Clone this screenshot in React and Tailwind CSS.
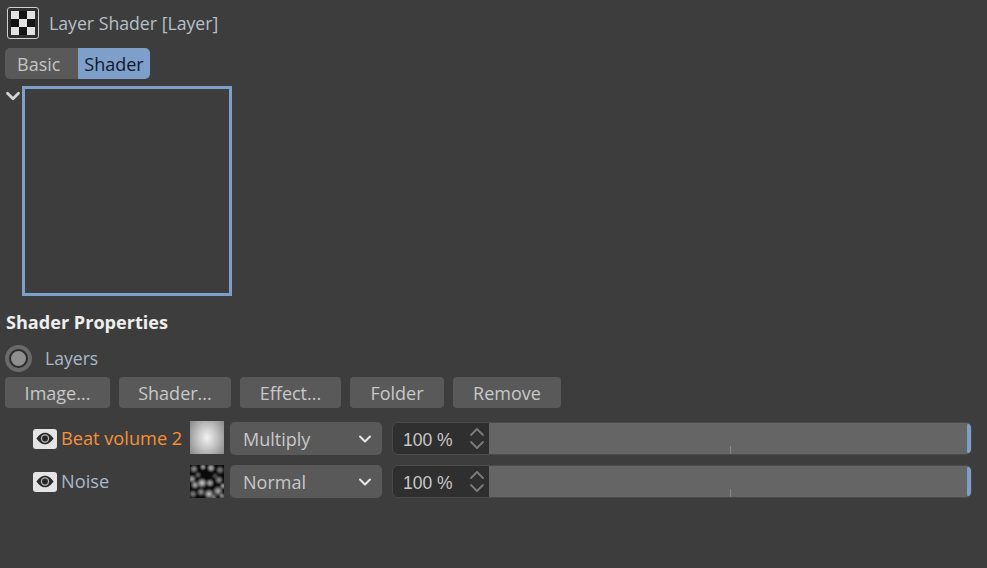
import { ChevronDown, ChevronUp } from "lucide-react";

function CheckerIcon() {
  return (
    <div className="w-[32px] h-[32px] rounded-[3px] bg-[#2f2f2f] border border-[#d0d0d0] p-[3px] shrink-0">
      <svg viewBox="0 0 3 3" className="w-full h-full" shapeRendering="crispEdges">
        <rect width="3" height="3" fill="#e2e2e2" />
        <rect x="1" y="0" width="1" height="1" fill="#141414" />
        <rect x="0" y="1" width="1" height="1" fill="#141414" />
        <rect x="2" y="1" width="1" height="1" fill="#141414" />
        <rect x="1" y="2" width="1" height="1" fill="#141414" />
      </svg>
    </div>
  );
}

function EyeButton() {
  return (
    <div className="w-[24px] h-[20px] rounded-[3px] bg-[#e4e4e4] flex items-center justify-center shrink-0">
      <svg viewBox="0 0 20 14" className="w-[18px] h-[13px]">
        <path d="M0.5 7 C4 2 7 0.5 10 0.5 C13 0.5 16 2 19.5 7 C16 12 13 13.5 10 13.5 C7 13.5 4 12 0.5 7 Z" fill="#2a2a2a" />
        <circle cx="10" cy="7" r="4.6" fill="#b8b8b8" />
        <circle cx="10" cy="7" r="3.2" fill="#262626" />
      </svg>
    </div>
  );
}

const noiseBlobs = [
  [4, 4, 5, 0.7], [13, 2, 4, 0.8], [21, 3, 5, 0.9], [30, 5, 5, 0.6], [8, 10, 4, 0.5],
  [2, 14, 5, 0.8], [12, 18, 6, 1], [20, 18, 5, 0.85], [29, 15, 5, 0.7], [5, 20, 5, 0.85],
  [25, 11, 4, 0.35], [3, 29, 5, 0.6], [11, 27, 5, 0.7], [19, 29, 6, 0.95], [28, 26, 6, 0.85],
  [33, 21, 4, 0.8], [32, 31, 4, 0.7], [24, 32, 4, 0.6],
];

function NoiseThumb() {
  return (
    <svg viewBox="0 0 34 33" className="w-[34px] h-[33px] bg-[#0a0a0a] shrink-0 -mt-[1px]">
      <defs>
        <radialGradient id="blob">
          <stop offset="0%" stopColor="#cccccc" />
          <stop offset="45%" stopColor="#a0a0a0" stopOpacity="0.8" />
          <stop offset="100%" stopColor="#808080" stopOpacity="0" />
        </radialGradient>
      </defs>
      {noiseBlobs.map(([x, y, r, o], i) => (
        <circle key={i} cx={x} cy={y} r={r} fill="url(#blob)" opacity={o} />
      ))}
    </svg>
  );
}

function GradientThumb() {
  return (
    <div className="w-[34px] h-[33px] shrink-0 -mt-[3px] bg-[radial-gradient(ellipse_70%_90%_at_50%_50%,#f2f2f2_0%,#c4c4c4_40%,#7c7c7c_100%)]" />
  );
}

function LayerRow({ name, active, mode, thumb, className }) {
  return (
    <div className={`flex items-center h-[33px] pl-[33px] ${className}`}>
      <EyeButton />
      <span className={`ml-[4px] w-[129px] text-[18.2px] leading-none ${active ? "text-[#f5913a]" : "text-[#a9b9c8]"}`}>
        {name}
      </span>
      {thumb}
      <div className="ml-[6px] w-[152px] h-[33px] rounded-[5px] bg-[#595959] flex items-center justify-between pl-[13px] pr-[7px] text-[18px] text-[#c8c8c8] shrink-0">
        <span className="pt-[2px]">{mode}</span>
        <ChevronDown size={20} strokeWidth={2.4} className="text-[#e8e8e8]" />
      </div>
      <div className="ml-[10px] w-[580px] h-[33px] rounded-[6px] border border-[#4a4a4a] flex overflow-hidden shrink-0">
        <div className="w-[96px] bg-[#2f2f2f] flex items-center justify-between pl-[10px] text-[#c8c8c8] shrink-0">
          <span className="pt-[3px] font-['Liberation_Sans',sans-serif] text-[17.5px]">100 %</span>
          <div className="flex flex-col items-center -space-y-[11px]">
            <ChevronUp size={24} strokeWidth={1.8} className="text-[#7c7c7c]" />
            <ChevronDown size={24} strokeWidth={1.8} className="text-[#7c7c7c]" />
          </div>
        </div>
        <div className="relative flex-1 bg-[#656565]">
          <div className="absolute left-[241px] bottom-0 w-px h-[8px] bg-[#7d8a99]" />
          <div className="absolute right-0 top-0 bottom-0 w-[4px] rounded-l-[3px] bg-[#7f9fcb]" />
        </div>
      </div>
    </div>
  );
}

function ActionButton({ label, width }) {
  return (
    <div className={`${width} h-[31px] pt-[2px] rounded-[4px] bg-[#595959] flex items-center justify-center text-[18px] text-[#c8c8c8] shrink-0`}>
      {label}
    </div>
  );
}

export default function App() {
  return (
    <div className="w-[987px] h-[568px] bg-[#3d3d3d] overflow-hidden font-['Open_Sans','Noto_Sans',sans-serif] text-[#c8c8c8]">
      {/* Header */}
      <div className="flex items-center pl-[7px] pt-[7px]">
        <CheckerIcon />
        <span className="ml-[10px] pt-[2px] text-[17.7px] leading-none text-[#b8c0c8]">Layer Shader [Layer]</span>
      </div>

      {/* Tabs */}
      <div className="flex mt-[9px] ml-[5px] h-[31px] w-[145px] rounded-[5px] overflow-hidden text-[18px]">
        <div className="w-[73px] pt-[2px] bg-[#595959] text-[#c4c4c4] flex items-center pl-[12px]">Basic</div>
        <div className="w-[72px] pt-[2px] bg-[#7f9fcb] text-[#10182a] flex items-center justify-center">Shader</div>
      </div>

      {/* Preview */}
      <div className="flex mt-[7px] pl-[2px]">
        <ChevronDown size={22} strokeWidth={3} className="text-[#d4d4d4] shrink-0 -mt-[1px] -mr-[2px]" />
        <div className="w-[210px] h-[210px] border-[3px] border-[#7f9fcb]" />
      </div>

      {/* Shader properties */}
      <div className="mt-[14px] pl-[6px] text-[18.1px] leading-[24px] font-bold text-[#eeeeee]">Shader Properties</div>

      <div className="flex items-center mt-[11px] pl-[5px] h-[27px]">
        <div className="w-[27px] h-[27px] rounded-full bg-[#6a6a6a] flex items-center justify-center">
          <div className="w-[19px] h-[19px] rounded-full bg-[#8f8f8f] border-2 border-[#2c2c2c]" />
        </div>
        <span className="ml-[13px] text-[17.6px] text-[#a9b9c8]">Layers</span>
      </div>

      <div className="flex gap-[9px] mt-[5px] pl-[5px]">
        <ActionButton label="Image..." width="w-[105px]" />
        <ActionButton label="Shader..." width="w-[112px]" />
        <ActionButton label="Effect..." width="w-[101px]" />
        <ActionButton label="Folder" width="w-[94px]" />
        <ActionButton label="Remove" width="w-[108px]" />
      </div>

      {/* Layers */}
      <LayerRow name="Beat volume 2" active mode="Multiply" thumb={<GradientThumb />} className="mt-[14px]" />
      <LayerRow name="Noise" mode="Normal" thumb={<NoiseThumb />} className="mt-[10px]" />
    </div>
  );
}
